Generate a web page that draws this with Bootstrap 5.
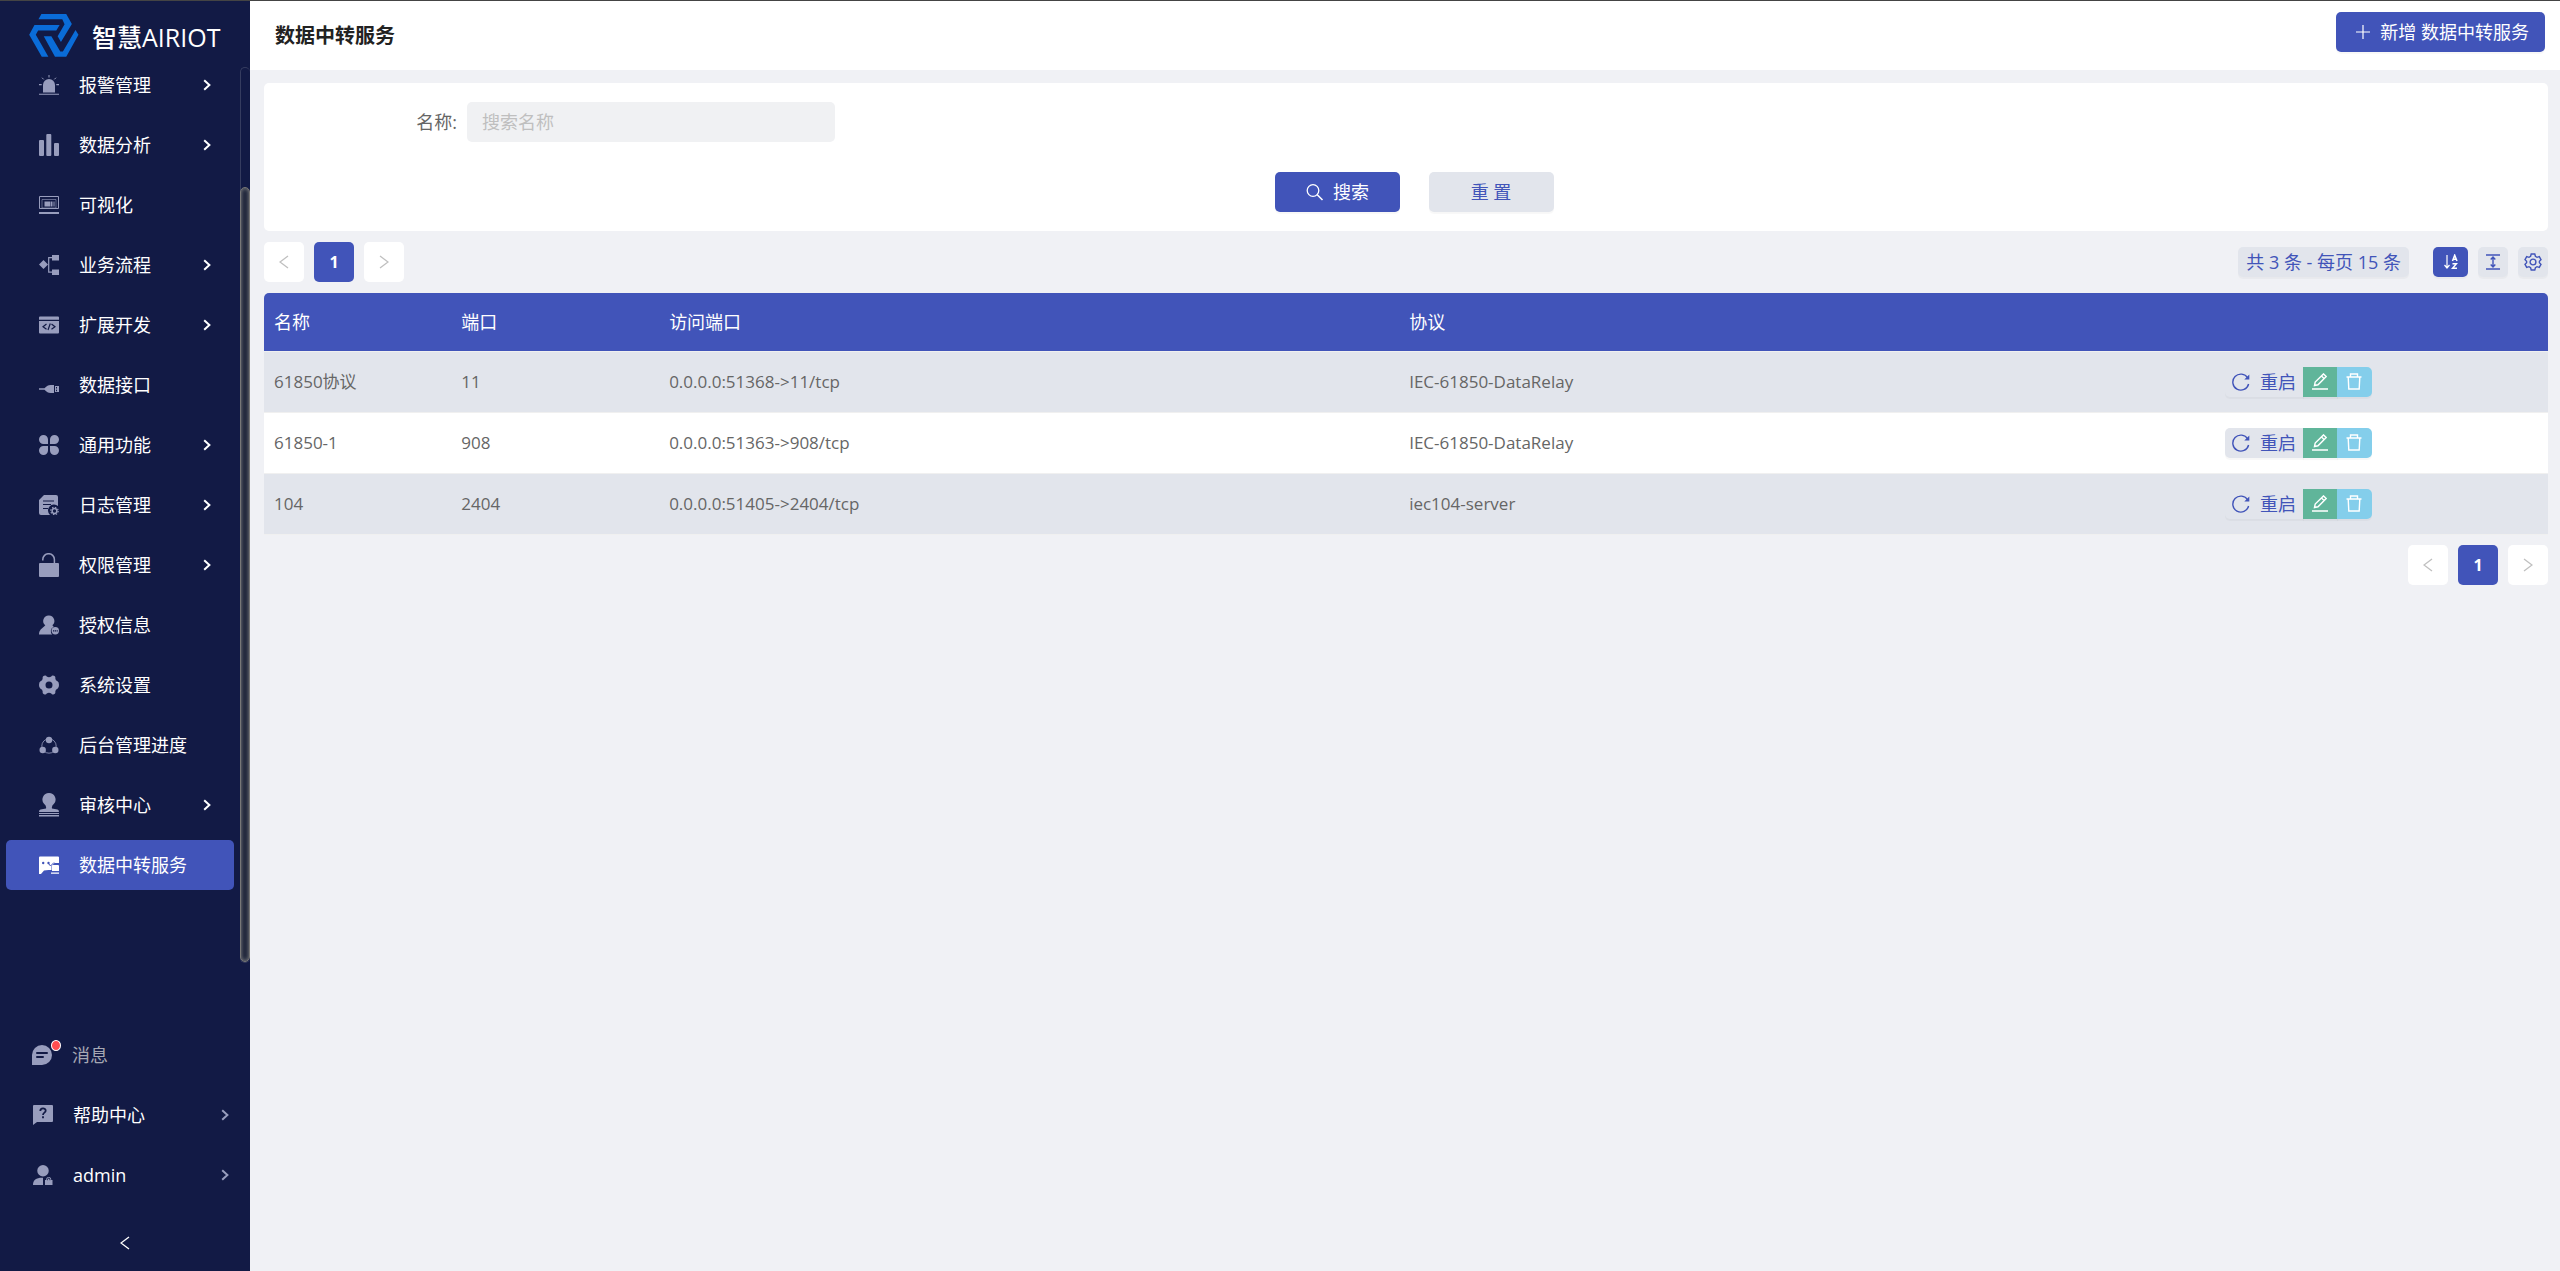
<!DOCTYPE html>
<html lang="zh-CN">
<head>
<meta charset="utf-8">
<meta name="viewport" content="width=device-width, initial-scale=1">
<title>数据中转服务</title>
<link rel="stylesheet" href="https://cdn.jsdelivr.net/npm/bootstrap@5.3.0/dist/css/bootstrap.min.css">
<style>
:root{--navy:#121a45;--brand:#4154b9;--soft:#e2e5ec;--page:#f0f1f5;--muted-icon:#989dbd}
body{font-family:"Open Sans","Noto Sans CJK SC",sans-serif;font-size:17px;line-height:24px;color:#666;background:var(--page)}
svg{display:block;flex:none}
.shell{border-top:1px solid #444}
.side{width:250px;background:var(--navy);font-size:18px}
.brand-head{height:54px;padding:13px 0 0 29px;gap:13px;font-size:25px;line-height:46px;font-weight:500;color:#fff}
.menu-list li{padding:5px 6px}
.side-link{height:50px;padding:0 23px 0 33px;gap:20px;color:#fff;text-decoration:none;border-radius:5px}
.side-link svg:first-child{color:var(--muted-icon)}
.side-link.active{background:var(--brand)}
.side-link.active svg:first-child{color:#fff}
.track{width:10px;height:896px;margin-top:12px;padding-top:119px;border:1px solid #353c5f;border-right:0;border-radius:5px}
.thumb{height:100%;margin-left:-1px;background:#1e253a;border:1px solid #777;border-radius:5px;box-shadow:inset 0 0 4px #8a8a8a}
.foot-link{height:60px;padding:0 21px 0 33px;gap:20px;color:#fff;text-decoration:none}
.foot-link svg{color:var(--muted-icon)}
.foot-link.dim{color:#a5a7b3}
.foot-link.dim svg{margin-left:-1px}
.dot{width:10px;height:11px;top:-5px;left:18px;background:#ff4d4f;border:1px solid #fff}
.collapse-btn{height:66px;padding-top:10px;color:#fff}
.topbar{height:69px;background:#fff;padding:11px 15px 0 25px}
.topbar h1{font-size:20px;line-height:48px;font-weight:700;color:#222}
.btn{--bs-btn-font-size:18px;--bs-btn-line-height:24px;--bs-btn-border-radius:5px;--bs-btn-border-width:0;box-shadow:0 2px 1px rgba(0,0,0,.03)}
.btn-brand{--bs-btn-color:#fff;--bs-btn-bg:var(--brand);--bs-btn-hover-bg:#5669cc;--bs-btn-hover-color:#fff}
.btn-soft{--bs-btn-color:var(--brand);--bs-btn-bg:var(--soft);--bs-btn-hover-bg:#d6dae5;--bs-btn-hover-color:var(--brand)}
.btn-edit{--bs-btn-color:#fff;--bs-btn-bg:#60b59a;--bs-btn-hover-bg:#4fa489;--bs-btn-hover-color:#fff}
.btn-del{--bs-btn-color:#fff;--bs-btn-bg:#84ceeb;--bs-btn-hover-bg:#6bc0e2;--bs-btn-hover-color:#fff}
.add-btn{gap:6px}
.content-pad{padding:13px 12px 0 14px}
.search-card{background:#fff;border-radius:5px;padding:19px 0}
.search-label{width:203px;padding-right:10px;font-size:18px}
.search-box{height:40px;background:#f0f1f3;border:0;border-radius:5px;padding:0 15px;font-size:18px}
.search-box::placeholder{color:#bfbfbf}
.form-actions{gap:29px;padding:30px 0 0 16px}
.form-actions .btn{width:125px;height:40px}
.list-bar{padding:11px 0}
.pager{gap:10px}
.pager .page-link{width:40px;height:40px;margin-left:0;background:#fff;color:#bfbfbf;border:0;border-radius:5px;padding:0}
.pager .page-item .page-link{margin-left:0;border-radius:5px}
.pager .active .page-link{background:var(--brand);color:#fff;font-weight:700}
.pager-end{padding-top:10px}
.tools{gap:10px}
.total{height:30px;margin-right:14px;font-size:18px}
.sq{width:30px;height:30px}
.wide{width:35px;height:30px}
.relay-table{--bs-table-bg:transparent;table-layout:fixed;border-radius:5px 5px 0 0;overflow:hidden}
.relay-table th,.relay-table td{padding:0 10px;border-bottom:1px solid #f0f0f0;color:#666;vertical-align:middle}
.relay-table th{height:58px;background:var(--brand);color:#fff;font-weight:400;font-size:18px}
.relay-table td{height:61px;background:#fff}
.relay-table tbody tr:nth-child(odd) td{background:var(--soft)}
.relay-table .btn-group>.btn{margin-left:0}
.c1{width:8.2%}.c2{width:9.1%}.c3{width:32.4%}.c4{width:35.7%}
.restart{width:79px;height:30px;gap:10px}
</style>
<script src="https://cdn.jsdelivr.net/npm/bootstrap@5.3.0/dist/js/bootstrap.bundle.min.js"></script>
</head>
<body>
<svg width="0" height="0" class="position-absolute" aria-hidden="true">
<defs>
<symbol id="chev" viewBox="0 0 8 12"><path d="M1.2 1.2 6.4 6 1.2 10.8" fill="none" stroke="currentColor" stroke-width="2"/></symbol>
<symbol id="lt" viewBox="0 0 10 14"><path d="M9 1 1 7l8 6" fill="none" stroke="currentColor" stroke-width="1.3"/></symbol>
<symbol id="gt" viewBox="0 0 10 14"><path d="M1 1l8 6-8 6" fill="none" stroke="currentColor" stroke-width="1.3"/></symbol>
<symbol id="alarm" viewBox="0 0 20 20"><path d="M4 17.500V10a6 6 0 0 1 12 0v7.500zM0 18.800h20v1H0zM9.500 0h1v2.500h-1zM0 9h2.700v1.200H0zM17.300 9H20v1.200h-2.700z" fill="currentColor"/><path d="M3 2.700l1.700 1.700M17 2.700l-1.700 1.700" stroke="currentColor"/></symbol>
<symbol id="bars" viewBox="0 0 20 22"><path d="M0 7q0-1 1-1h3q1 0 1 1v14q0 1-1 1H1q-1 0-1-1zM7.300 1q0-1 1-1h3q1 0 1 1v20q0 1-1 1h-3q-1 0-1-1zM15 10q0-1 1-1h3q1 0 1 1v11q0 1-1 1h-3q-1 0-1-1z" fill="currentColor"/></symbol>
<symbol id="screen" viewBox="0 0 20 20"><path d="M.5 1.500h19v12H.5z" fill="none" stroke="currentColor"/><path d="M0 17h20v2H0z" fill="currentColor"/><path d="M3 13V4.500h14V13M3 13h14" fill="none" stroke="currentColor" stroke-width=".6"/><path d="M5.500 6.500h6v5h-6zM12 6.500h1.500v5H12zM14.500 6.500h1v5h-1z" fill="currentColor"/></symbol>
<symbol id="flow" viewBox="0 0 20 20"><path d="M4.500 5 9 9.500 4.500 14 0 9.500zM13 0h7v5.500h-7zM13 14.500h7V20h-7z" fill="currentColor"/><path d="M13 2.700H9.700v14.500H13" fill="none" stroke="currentColor" stroke-width="1.200"/></symbol>
<symbol id="code" viewBox="0 0 20 20"><path d="M1 1.500h18q1 0 1 1v2.200H0V2.500q0-1 1-1zM0 6h20v11.500q0 1-1 1H1q-1 0-1-1z" fill="currentColor"/><path d="M7.500 9 4 11.700l3.500 2.600M12.500 9 16 11.700l-3.500 2.600M11.300 8.500l-2.300 6.500" fill="none" stroke="#121a45" stroke-width="1.200"/></symbol>
<symbol id="plug" viewBox="0 0 20 20"><path d="M0 13.200h5.500C8 11 9 10 11.500 10H15v8h-3.500c-2.500 0-3.500-1-6-3.200H0zM16 11h4v6h-4z" fill="currentColor"/><path d="M17.500 12v1.500M17.500 14.700v1.500" stroke="#121a45"/></symbol>
<symbol id="clover" viewBox="0 0 20 20"><path d="M4.500 0A4.500 4.500 0 0 1 9 4.500V9H4.500a4.500 4.500 0 0 1 0-9zM15.500 0a4.500 4.500 0 0 1 0 9H11V4.500A4.500 4.500 0 0 1 15.500 0zM4.500 11H9v4.500A4.500 4.500 0 1 1 4.500 11zM11 11h4.500a4.500 4.500 0 1 1-4.500 4.500z" fill="currentColor"/></symbol>
<symbol id="log" viewBox="0 0 20 20"><path d="M5 0h12q2 0 2 2v9a5.300 5.300 0 0 0-8 9H2q-2 0-2-2V5z" fill="currentColor"/><path d="M4 6h11M4 9.500h8M4 13.500h5" stroke="#121a45" stroke-width="1.200"/><circle cx="15.500" cy="16" r="2.400" fill="none" stroke="currentColor" stroke-width="1.500"/><circle cx="15.500" cy="16" r="3.700" fill="none" stroke="currentColor" stroke-width="1.200" stroke-dasharray="1.450"/></symbol>
<symbol id="lock" viewBox="0 0 20 24"><path d="M1 10h18q1 0 1 1v12q0 1-1 1H1q-1 0-1-1V11q0-1 1-1z" fill="currentColor"/><path d="M3.800 7.500V6.500a5.800 5.800 0 0 1 11.600 0V10" fill="none" stroke="currentColor" stroke-width="1.500"/></symbol>
<symbol id="auth" viewBox="0 0 20 20"><path d="M10 .5a5.500 5.500 0 0 1 3.300 9.800c1 .8 1.400 1.300 1.200 1.700a4.600 4.600 0 0 0-1.300 7.500H0c0-4.500 3-6 6.300-9.200A5.500 5.500 0 0 1 10 .5z" fill="currentColor"/><circle cx="16.300" cy="15.800" r="3.700" fill="currentColor"/><path d="M14 15.800h5" stroke="#121a45" stroke-width="1.200" stroke-dasharray="1.200 .6"/></symbol>
<symbol id="cog" viewBox="0 0 20 20"><path fill-rule="evenodd" fill="currentColor" d="M5 .8Q7-.2 7.700 1.500q2.300 1.500 4.600 0Q13-.2 15 .8q1.800.7 1.300 2.700.2 2.200 2.200 2.800Q20 7 20 10t-1.500 3.700q-2 .6-2.200 2.800.5 2-1.300 2.700-2 1-2.700-.7-2.300-1.500-4.600 0Q7 20.200 5 19.200q-1.800-.7-1.300-2.700-.2-2.200-2.200-2.800Q0 13 0 10t1.500-3.700q2-.6 2.200-2.800Q3.200 1.500 5 .8zM10 6.500a3.500 3.500 0 1 0 0 7 3.500 3.500 0 0 0 0-7z"/></symbol>
<symbol id="nodes" viewBox="0 0 20 20"><g fill="currentColor"><circle cx="10" cy="5" r="3.200"/><circle cx="3.700" cy="15" r="3.200"/><circle cx="16.300" cy="15" r="3.200"/></g><circle cx="10" cy="11" r="7.200" fill="none" stroke="currentColor" stroke-width=".8"/></symbol>
<symbol id="stamp" viewBox="0 0 20 24"><path d="M10 0a6.500 6.500 0 0 1 5 10.700Q12.300 13 13 15.500l5.500 1q1.500.3 1.500 2.500H0q0-2.200 1.500-2.500l5.500-1Q7.700 13 5 10.700A6.500 6.500 0 0 1 10 0zM0 20h20v.9H0zM0 22h20v1.400H0z" fill="currentColor"/></symbol>
<symbol id="relay" viewBox="0 0 20 20"><path d="M1 1.500h18q1 0 1 1V8h-4.500l-3 3v4H9.500L5 15.500 2 19H0V2.500q0-1 1-1zM14 10h5q1 0 1 1v5h-7v-5q0-1 1-1zM12 17.500h8v1.300h-8z" fill="currentColor"/><g fill="#4154b9"><circle cx="4.200" cy="8" r="1.200"/><circle cx="9.500" cy="8" r="1.200"/></g><path d="M9.500 8.500l2 2.500 3.500-3.500" fill="none" stroke="#4154b9"/></symbol>
<symbol id="msg" viewBox="0 0 20 20"><path d="M10 0a10 10 0 0 1 0 20H0V10A10 10 0 0 1 10 0z" fill="currentColor"/><path d="M5 8h10M5 12h6" stroke="#121a45" stroke-width="2" stroke-linecap="round"/></symbol>
<symbol id="help" viewBox="0 0 20 20"><path d="M1 0h18q1 0 1 1v15q0 1-1 1H4l-4 3V1q0-1 1-1z" fill="currentColor"/><path d="M7.300 6c0-3.400 5.400-3.400 5.400-.3 0 2-2.700 1.900-2.700 4.300M10 11.300v2" fill="none" stroke="#121a45" stroke-width="1.800"/></symbol>
<symbol id="user" viewBox="0 0 20 20"><path d="M10 0a5.700 5.700 0 0 1 0 11.500A5.700 5.700 0 0 1 10 0zM0 20c0-5 3.500-7.500 10-7.200V20zM12 20v-5h1.200v-.5a2.300 2.300 0 0 1 5 0v.5h1.300v5z" fill="currentColor"/><path d="M14.500 15.200v-.8a1.200 1.200 0 0 1 2.400 0v.8" stroke="#121a45" fill="none"/></symbol>
<symbol id="reload" viewBox="0 0 18 18"><path d="M15.700 5A8 8 0 1 0 16.600 11" fill="none" stroke="currentColor" stroke-width="1.400"/><path d="M17.300 1.500V6.500h-5z" fill="currentColor"/></symbol>
<symbol id="pen" viewBox="0 0 16 17"><path d="M2.500 12.500 3.200 9 11.500.9 14.200 3.500 6 11.800zM9.500 3l2.500 2.500M0 16h16" fill="none" stroke="currentColor" stroke-width="1.400"/></symbol>
<symbol id="bin" viewBox="0 0 16 17"><path d="M.5 4h15M4.500 4V1h7v3M2.200 4l.6 12h10.400l.6-12" fill="none" stroke="currentColor" stroke-width="1.400"/></symbol>
</defs>
</svg>

<div class="shell d-flex min-vh-100">
<aside class="side d-flex flex-column flex-shrink-0">
<div class="brand-head d-flex">
<svg width="50" height="43" viewBox="88 42 150 130" fill="#0a6cd8"><path d="M125 42H200L217 72 184 127 174 109 195 73 188 58H116zM180 75H104L88 105 126 171H146L108 105 115 92H170zM132 109H155L182 155H190L228 90 237 105 200 171H166z"/></svg>
<span class="text-nowrap">智慧AIRIOT</span>
</div>
<nav class="d-flex" aria-label="主菜单">
<ul class="menu-list list-unstyled mb-0 flex-grow-1">
<li><a class="side-link d-flex align-items-center" href="#"><svg width="20" height="20"><use href="#alarm"/></svg><span>报警管理</span><svg class="ms-auto" width="8" height="12"><use href="#chev"/></svg></a></li>
<li><a class="side-link d-flex align-items-center" href="#"><svg width="20" height="22"><use href="#bars"/></svg><span>数据分析</span><svg class="ms-auto" width="8" height="12"><use href="#chev"/></svg></a></li>
<li><a class="side-link d-flex align-items-center" href="#"><svg width="20" height="20"><use href="#screen"/></svg><span>可视化</span></a></li>
<li><a class="side-link d-flex align-items-center" href="#"><svg width="20" height="20"><use href="#flow"/></svg><span>业务流程</span><svg class="ms-auto" width="8" height="12"><use href="#chev"/></svg></a></li>
<li><a class="side-link d-flex align-items-center" href="#"><svg width="20" height="20"><use href="#code"/></svg><span>扩展开发</span><svg class="ms-auto" width="8" height="12"><use href="#chev"/></svg></a></li>
<li><a class="side-link d-flex align-items-center" href="#"><svg width="20" height="20"><use href="#plug"/></svg><span>数据接口</span></a></li>
<li><a class="side-link d-flex align-items-center" href="#"><svg width="20" height="20"><use href="#clover"/></svg><span>通用功能</span><svg class="ms-auto" width="8" height="12"><use href="#chev"/></svg></a></li>
<li><a class="side-link d-flex align-items-center" href="#"><svg width="20" height="20"><use href="#log"/></svg><span>日志管理</span><svg class="ms-auto" width="8" height="12"><use href="#chev"/></svg></a></li>
<li><a class="side-link d-flex align-items-center" href="#"><svg width="20" height="24"><use href="#lock"/></svg><span>权限管理</span><svg class="ms-auto" width="8" height="12"><use href="#chev"/></svg></a></li>
<li><a class="side-link d-flex align-items-center" href="#"><svg width="20" height="20"><use href="#auth"/></svg><span>授权信息</span></a></li>
<li><a class="side-link d-flex align-items-center" href="#"><svg width="20" height="20"><use href="#cog"/></svg><span>系统设置</span></a></li>
<li><a class="side-link d-flex align-items-center" href="#"><svg width="20" height="20"><use href="#nodes"/></svg><span>后台管理进度</span></a></li>
<li><a class="side-link d-flex align-items-center" href="#"><svg width="20" height="24"><use href="#stamp"/></svg><span>审核中心</span><svg class="ms-auto" width="8" height="12"><use href="#chev"/></svg></a></li>
<li><a class="side-link active d-flex align-items-center" href="#" aria-current="page"><svg width="20" height="20"><use href="#relay"/></svg><span>数据中转服务</span></a></li>
</ul>
<div class="track" aria-hidden="true"><div class="thumb"></div></div>
</nav>
<div class="mt-auto">
<a class="foot-link dim d-flex align-items-center" href="#"><span class="position-relative"><svg width="20" height="20"><use href="#msg"/></svg><span class="dot position-absolute rounded-circle"></span></span><span>消息</span></a>
<a class="foot-link d-flex align-items-center" href="#"><svg width="20" height="20"><use href="#help"/></svg><span>帮助中心</span><svg class="ms-auto" width="8" height="12"><use href="#chev"/></svg></a>
<a class="foot-link d-flex align-items-center" href="#"><svg width="20" height="20"><use href="#user"/></svg><span>admin</span><svg class="ms-auto" width="8" height="12"><use href="#chev"/></svg></a>
<button type="button" class="collapse-btn w-100 border-0 bg-transparent d-flex align-items-center justify-content-center" aria-label="收起菜单"><svg width="10" height="14"><use href="#lt"/></svg></button>
</div>
</aside>

<main class="flex-grow-1">
<header class="topbar d-flex justify-content-between align-items-start">
<h1 class="mb-0">数据中转服务</h1>
<button type="button" class="btn btn-brand add-btn d-flex align-items-center px-3 py-2"><svg class="mx-1" width="14" height="14" viewBox="0 0 14 14"><path d="M0 7h14M7 0v14" stroke="currentColor" stroke-width="1.200"/></svg><span>新增 数据中转服务</span></button>
</header>

<div class="content-pad">
<form class="search-card">
<div class="row g-0">
<div class="col-3 d-flex align-items-center">
<label class="search-label flex-shrink-0 text-end" for="relayName">名称:</label>
<input id="relayName" type="text" class="form-control search-box" placeholder="搜索名称">
</div>
</div>
<div class="form-actions d-flex justify-content-center">
<button type="button" class="btn btn-brand d-flex align-items-center justify-content-center p-0"><svg class="me-2" width="20" height="18" viewBox="0 0 20 18"><circle cx="8" cy="7.500" r="5.800" fill="none" stroke="currentColor" stroke-width="1.300"/><path d="M12 11.500l5.500 5.500" stroke="currentColor" stroke-width="1.600"/></svg>搜索</button>
<button type="reset" class="btn btn-soft p-0">重 置</button>
</div>
</form>

<div class="list-bar d-flex justify-content-between align-items-center">
<ul class="pagination pager mb-0">
<li class="page-item"><a class="page-link d-flex align-items-center justify-content-center" href="#" aria-label="上一页"><svg width="10" height="14"><use href="#lt"/></svg></a></li>
<li class="page-item active"><a class="page-link d-flex align-items-center justify-content-center" href="#">1</a></li>
<li class="page-item"><a class="page-link d-flex align-items-center justify-content-center" href="#" aria-label="下一页"><svg width="10" height="14"><use href="#gt"/></svg></a></li>
</ul>
<div class="tools d-flex align-items-center">
<button type="button" class="btn btn-soft total px-2 py-0">共 3 条 - 每页 15 条</button>
<button type="button" class="btn btn-brand wide p-0 d-flex align-items-center justify-content-center" aria-label="排序"><svg width="14" height="16" viewBox="0 0 14 16" fill="none" stroke="currentColor"><path d="M3 1v12M.5 11 3 14l2.500-3" stroke-width="1.200"/><path d="M8.500 7 10.700 1.200 13 7M9.200 5.200h3M8.500 9.700h4L8.600 14.300H13" stroke-width="1.500"/></svg></button>
<button type="button" class="btn btn-soft sq p-0 d-flex align-items-center justify-content-center" aria-label="行高"><svg width="14" height="16" viewBox="0 0 14 16" fill="none" stroke="currentColor" stroke-width="1.400"><path d="M0 1h14M0 15h14M7 3.500v9M4.700 5.500 7 3l2.300 2.500M4.700 10.500 7 13l2.300-2.500"/></svg></button>
<button type="button" class="btn btn-soft sq p-0 d-flex align-items-center justify-content-center" aria-label="设置"><svg width="18" height="18" viewBox="0 0 18 18" fill="none" stroke="currentColor" stroke-width="1.400"><circle cx="9" cy="9" r="2.900"/><path d="M7.200 1h3.600l.6 2.300 1.600 1L15.300 3.600 17 6.700 15.400 8.300v1.500L17 11.300l-1.700 3.100-2.300-.7-1.600 1-.6 2.300H7.200l-.6-2.300-1.600-1-2.300.7L1 11.300 2.600 9.800V8.300L1 6.700 2.700 3.600 5 4.300l1.600-1z"/></svg></button>
</div>
</div>

<table class="table relay-table mb-0">
<thead><tr><th class="c1" scope="col">名称</th><th class="c2" scope="col">端口</th><th class="c3" scope="col">访问端口</th><th class="c4" scope="col">协议</th><th scope="col" aria-label="操作"></th></tr></thead>
<tbody>
<tr><td>61850协议</td><td>11</td><td>0.0.0.0:51368-&gt;11/tcp</td><td>IEC-61850-DataRelay</td><td><div class="btn-group"><button type="button" class="btn btn-soft restart p-0 d-flex align-items-center justify-content-center"><svg width="18" height="18"><use href="#reload"/></svg>重启</button><button type="button" class="btn btn-edit wide p-0 d-flex align-items-center justify-content-center" aria-label="编辑"><svg width="16" height="17"><use href="#pen"/></svg></button><button type="button" class="btn btn-del wide p-0 d-flex align-items-center justify-content-center" aria-label="删除"><svg width="16" height="17"><use href="#bin"/></svg></button></div></td></tr>
<tr><td>61850-1</td><td>908</td><td>0.0.0.0:51363-&gt;908/tcp</td><td>IEC-61850-DataRelay</td><td><div class="btn-group"><button type="button" class="btn btn-soft restart p-0 d-flex align-items-center justify-content-center"><svg width="18" height="18"><use href="#reload"/></svg>重启</button><button type="button" class="btn btn-edit wide p-0 d-flex align-items-center justify-content-center" aria-label="编辑"><svg width="16" height="17"><use href="#pen"/></svg></button><button type="button" class="btn btn-del wide p-0 d-flex align-items-center justify-content-center" aria-label="删除"><svg width="16" height="17"><use href="#bin"/></svg></button></div></td></tr>
<tr><td>104</td><td>2404</td><td>0.0.0.0:51405-&gt;2404/tcp</td><td>iec104-server</td><td><div class="btn-group"><button type="button" class="btn btn-soft restart p-0 d-flex align-items-center justify-content-center"><svg width="18" height="18"><use href="#reload"/></svg>重启</button><button type="button" class="btn btn-edit wide p-0 d-flex align-items-center justify-content-center" aria-label="编辑"><svg width="16" height="17"><use href="#pen"/></svg></button><button type="button" class="btn btn-del wide p-0 d-flex align-items-center justify-content-center" aria-label="删除"><svg width="16" height="17"><use href="#bin"/></svg></button></div></td></tr>
</tbody>
</table>

<ul class="pagination pager pager-end justify-content-end mb-0">
<li class="page-item"><a class="page-link d-flex align-items-center justify-content-center" href="#" aria-label="上一页"><svg width="10" height="14"><use href="#lt"/></svg></a></li>
<li class="page-item active"><a class="page-link d-flex align-items-center justify-content-center" href="#">1</a></li>
<li class="page-item"><a class="page-link d-flex align-items-center justify-content-center" href="#" aria-label="下一页"><svg width="10" height="14"><use href="#gt"/></svg></a></li>
</ul>
</div>
</main>
</div>
</body>
</html>
